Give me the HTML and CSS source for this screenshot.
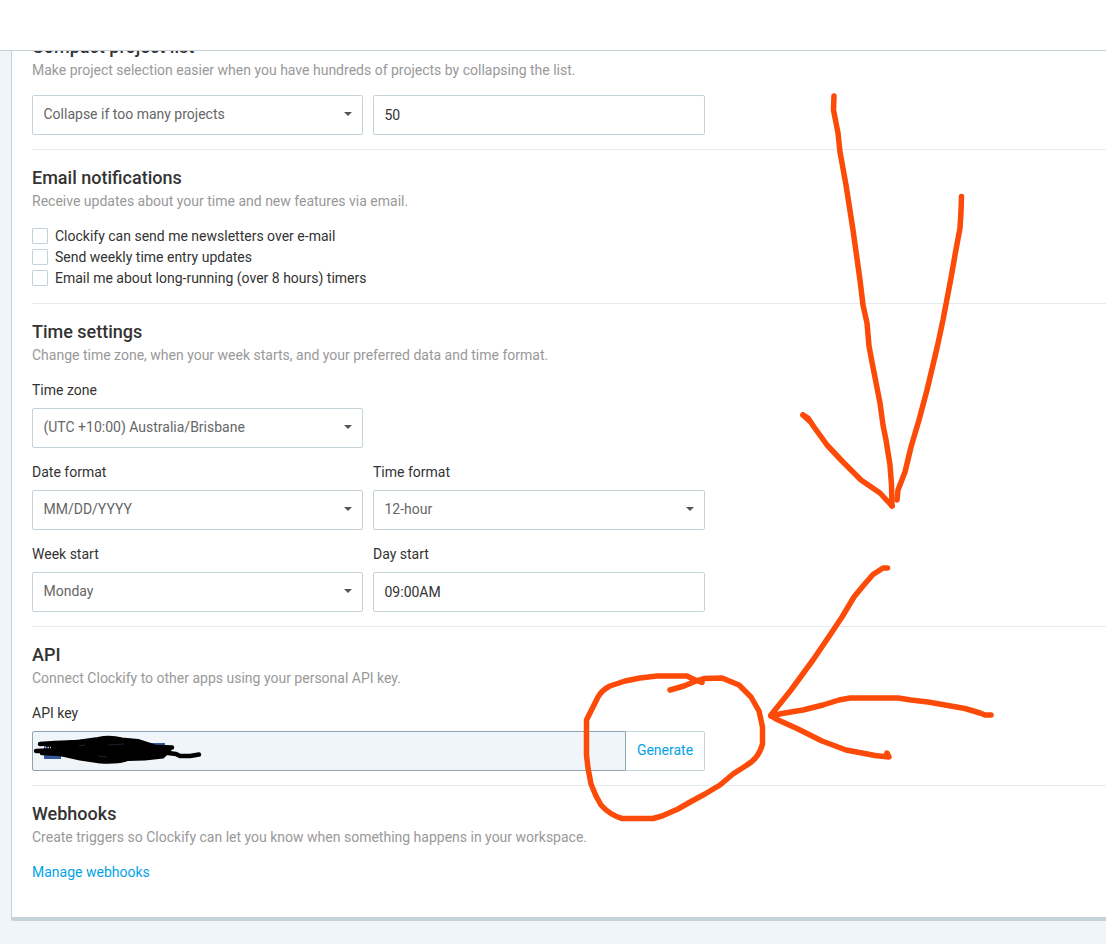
FILE: index.html
```html
<!DOCTYPE html>
<html lang="en">
<head>
<meta charset="utf-8">
<title>Personal settings</title>
<link rel="stylesheet" href="styles.css">
</head>
<body>
<header class="topbar"></header>
<main class="page">
  <div class="card">
    <section class="section section-first">
      <h2 class="title">Compact project list</h2>
      <p class="desc">Make project selection easier when you have hundreds of projects by collapsing the list.</p>
      <div class="grid">
        <div class="control select"><span>Collapse if too many projects</span><i class="caret"></i></div>
        <div class="control">50</div>
      </div>
    </section>
    <section class="section">
      <h2 class="title">Email notifications</h2>
      <p class="desc">Receive updates about your time and new features via email.</p>
      <div class="check"><span class="box"></span>Clockify can send me newsletters over e-mail</div>
      <div class="check"><span class="box"></span>Send weekly time entry updates</div>
      <div class="check"><span class="box"></span>Email me about long-running (over 8 hours) timers</div>
    </section>
    <section class="section">
      <h2 class="title">Time settings</h2>
      <p class="desc">Change time zone, when your week starts, and your preferred data and time format.</p>
      <div class="grid">
        <div class="field wide">
          <div class="label">Time zone</div>
          <div class="control select half"><span>(UTC +10:00) Australia/Brisbane</span><i class="caret"></i></div>
        </div>
        <div class="field">
          <div class="label">Date format</div>
          <div class="control select"><span>MM/DD/YYYY</span><i class="caret"></i></div>
        </div>
        <div class="field">
          <div class="label">Time format</div>
          <div class="control select"><span>12-hour</span><i class="caret"></i></div>
        </div>
        <div class="field">
          <div class="label">Week start</div>
          <div class="control select"><span>Monday</span><i class="caret"></i></div>
        </div>
        <div class="field">
          <div class="label">Day start</div>
          <div class="control">09:00AM</div>
        </div>
      </div>
    </section>
    <section class="section">
      <h2 class="title">API</h2>
      <p class="desc">Connect Clockify to other apps using your personal API key.</p>
      <div class="label">API key</div>
      <div class="key-row">
        <div class="key"></div>
        <div class="generate">Generate</div>
      </div>
    </section>
    <section class="section section-last">
      <h2 class="title">Webhooks</h2>
      <p class="desc">Create triggers so Clockify can let you know when something happens in your workspace.</p>
      <a class="link">Manage webhooks</a>
    </section>
  </div>
</main>
<svg class="ink" width="1106" height="944" viewBox="0 0 1106 944">
  <g fill="#35579b">
    <rect x="44" y="743" width="17" height="16"/>
    <rect x="150" y="743" width="15" height="10"/>
  </g>
  <g class="black">
    <path fill="#000" stroke-width="3" d="M50 744L80 741L98 738.500Q110 736 122 739L138 740.500L155 746L170 750L163 757L145 759L128 759.500Q120 763 100 762L80 759L62 755L44 751Z"/>
    <path d="M40 744L55 743L82 742M158 747L172 747.500"/>
    <path d="M36 751L60 750M42 753L62 754"/>
    <path d="M160 752L176 754L180 756H190L199 754.500"/>
  </g>
  <path d="M45 747.500h6" stroke="#b4c3de" stroke-width="1.500" stroke-dasharray="1.500 1"/>
  <path d="M79 746l6 -1M108 745l16 -1M98 756l9 1" stroke="#252c3c" stroke-width=".8"/>
  <g class="orange">
    <path d="M834 96L833.500 110L838 133L840 152L846 185L853 230L860 280L863 305L867 323L869 346L872 362L880 403L883 425L886 440L890 465L891.500 485L892 506"/>
    <path d="M803 415L808 418L814 427L827 445L842 461L861 480L880 493L892 506"/>
    <path d="M803 415L809 420.500"/>
    <path d="M961.500 196.500L961 212L960 228L955 255L951 278L943 320L937 348L927 390L919 420L911 447L905 472L898 490L897 500"/>
    <path d="M887.500 568L883 568L873 574.500L863 586L854 597L842 617L830 635L813 660L791 690L771 715"/>
    <path d="M771 716L782 713.500L803 710L823 705L839 700L850 698H898L911 700L928 702L965 708.500L980 713L985 715H991"/>
    <path d="M771 716L776 719L798 729L822 741L846 750L862 753L875 755.500L889 757L887 753"/>
    <path d="M670 690L684 686L696 681L704 678.500L722 678L739 685L751 697L759 711L762.500 727V744Q759 758 747 765L733 774L720 785L705 794L692 801L678 809L662 816L653 818.500H622Q610 815 601 805L596 796L591 784L588 768L586.500 755V720L592 709L598 697Q602 690 610 686L625 681L640 678L657 676H687L692 678.500L702 682.500"/>
  </g>
</svg>
</body>
</html>
```
FILE: styles.css
```css
* { box-sizing: border-box; }

body {
  margin: 0;
  height: 944px;
  overflow: hidden;
  position: relative;
  background: #f0f5f9;
  color: #333;
  font: 14px/21px Roboto, "Liberation Sans", sans-serif;
}

.topbar {
  height: 51px;
  background: #fff;
  border-bottom: 1px solid #c6d2d9;
}

.page {
  height: 893px;
  padding-left: 11px;
  overflow: hidden;
}

.card {
  background: #fff;
  border-left: 1px solid #c6d2d9;
  border-bottom: 4px solid #c6d2d9;
  border-bottom-left-radius: 2px;
  padding-left: 20px;
}

.section {
  padding: 16px 0 14px;
  border-bottom: 1px solid #e4eaee;
}

.section-first { padding-top: 0; }

.section-first .title { margin-top: -16px; }

.section-last {
  padding-bottom: 34px;
  border-bottom: 0;
}

.title {
  margin: 0;
  font-size: 18px;
  font-weight: 500;
  line-height: 24px;
}

.desc {
  margin: 0 0 14px;
  padding-top: 1px;
  color: #999;
}

.grid {
  display: grid;
  grid-template-columns: 331px 332px;
  gap: 14px 10px;
}

.wide { grid-column: 1 / -1; }
.half { width: 331px; }
.label { margin-bottom: 7px; }

.control {
  display: flex;
  align-items: center;
  height: 40px;
  padding: 0 10.5px;
  border: 1px solid #c6d2d9;
  border-radius: 2px;
}

.select {
  justify-content: space-between;
  padding-bottom: 2px;
  color: #666;
}

.caret {
  border: 4px solid transparent;
  border-top-color: #555;
  border-bottom: 0;
}

.check {
  display: flex;
  align-items: flex-start;
  gap: 7px;
}

.box {
  width: 16px;
  height: 16px;
  margin-top: 2px;
  border: 1px solid #c6d2d9;
  border-radius: 1px;
}

.key-row {
  display: flex;
  width: 673px;
  height: 40px;
}

.key {
  width: 594px;
  background: #f0f5f9;
  border: 1px solid #90a4ae;
  border-radius: 2px 0 0 2px;
}

.generate {
  flex: 1;
  padding-bottom: 2px;
  display: flex;
  align-items: center;
  justify-content: center;
  border: 1px solid #c6d2d9;
  border-left: 0;
  border-radius: 0 2px 2px 0;
  color: #03a2e6;
}

.link {
  display: block;
  color: #03a2e6;
}

/* Hand-drawn annotations over the page */
.ink {
  position: absolute;
  inset: 0;
  pointer-events: none;
}

.black, .orange {
  fill: none;
  stroke-linecap: round;
  stroke-linejoin: round;
}

.black { stroke: #000; stroke-width: 4.5; }
.orange { stroke: #fc4a08; stroke-width: 5.5; }
```
